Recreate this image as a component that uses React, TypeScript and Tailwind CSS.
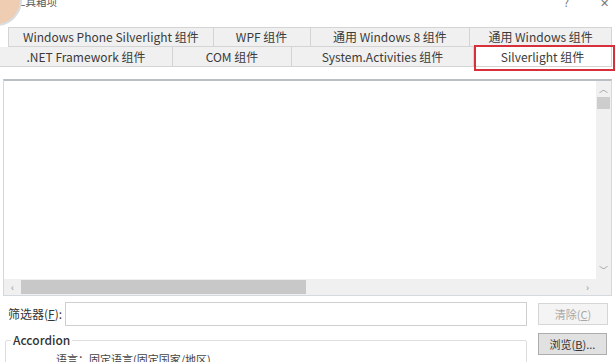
const font = { fontFamily: '"Noto Sans CJK SC", "Noto Sans", sans-serif' };

function Tab({ label, w, active }: { label: string; w: string; active?: boolean }) {
  return (
    <div
      className={`relative flex h-full items-center justify-center border-r border-[#d4d4d4] text-[12px] ${w} ${
        active ? "bg-white" : "bg-[#f0f0f0]"
      }`}
    >
      <span className="text-[#3b3b3b]">{label}</span>
      {active && <div className="absolute -top-[2px] -bottom-[5px] left-0 -right-[4px] border-2 border-[#d8303a]" />}
    </div>
  );
}

export default function App() {
  return (
    <div className="relative h-[362px] w-[615px] overflow-hidden bg-white text-[#333]" style={font}>
      {/* title bar */}
      <div className="relative h-[27px] bg-white">
        <span className="absolute -top-[6px] left-[-6px] text-[10.5px] text-[#555]">选择工具箱项</span>
        <div className="absolute -left-[30px] -top-[26px] h-[52px] w-[52px] rounded-full border-2 border-[#d9dde0] bg-[#efcdb2]" />
        <span className="absolute -top-[6px] right-[46px] text-[11px] text-[#777]">?</span>
        <span className="absolute -top-[6px] right-[6px] text-[11px] text-[#777]">✕</span>
      </div>

      {/* tabs */}
      <div className="ml-[8px] flex h-[20px] w-[604px] border-t border-b border-l border-[#d4d4d4]">
        <Tab label="Windows Phone Silverlight 组件" w="w-[205px]" />
        <Tab label="WPF 组件" w="w-[97px]" />
        <Tab label="通用 Windows 8 组件" w="w-[160px]" />
        <Tab label="通用 Windows 组件" w="w-[142px]" />
      </div>
      <div className="flex h-[20px] w-[612px] border-b border-[#d4d4d4]">
        <Tab label=".NET Framework 组件" w="w-[173px]" />
        <Tab label="COM 组件" w="w-[119px]" />
        <Tab label="System.Activities 组件" w="w-[182px]" />
        <Tab label="Silverlight 组件" w="w-[138px]" active />
      </div>

      {/* list */}
      <div className="mx-[3px] mt-[12px] flex h-[217px] flex-col border border-[#d3dadd] border-t-2 border-t-[#b9c0c3]">
        <div className="flex flex-1">
          <div className="flex-1 bg-white" />
          <div className="flex w-[15px] flex-col items-center bg-[#f0f0f0]">
            <span className="mt-[3px] text-[9px] leading-[10px] text-[#9a9a9a]">︿</span>
            <div className="mt-[3px] h-[12px] w-[13px] bg-[#cdcdcd]" />
            <div className="flex-1" />
            <span className="mb-[3px] text-[9px] leading-[10px] text-[#9a9a9a]">﹀</span>
          </div>
        </div>
        <div className="flex h-[16px] bg-[#f0f0f0]">
          <span className="w-[17px] text-center text-[10px] leading-[16px] text-[#9a9a9a]">‹</span>
          <div className="my-[1px] w-[285px] bg-[#c8c8c8]" />
          <div className="flex-1" />
          <span className="w-[17px] text-center text-[10px] leading-[16px] text-[#9a9a9a]">›</span>
          <div className="w-[15px]" />
        </div>
      </div>

      {/* filter row */}
      <div className="mt-[6px] flex h-[24px] items-center">
        <span className="ml-[8px] w-[57px] text-[12px] text-[#333]">
          筛选器(<span className="underline">F</span>):
        </span>
        <div className="h-[24px] w-[462px] border border-[#cfcfcf] bg-white" />
        <div className="ml-[11px] flex h-[22px] w-[70px] items-center justify-center border border-[#d6d6d6] bg-[#f4f4f4] text-[11px] text-[#a9a9a9]">
          清除(<span className="underline">C</span>)
        </div>
      </div>

      {/* bottom */}
      <div className="mt-[7px] flex">
        <div className="relative ml-[5px] mt-[7px] h-[40px] w-[522px] rounded-[2px] border border-[#dedede]">
          <span className="absolute -top-[10px] left-[5px] bg-white px-[2px] text-[12px] font-medium text-[#333]">
            Accordion
          </span>
          <div className="ml-[50px] mt-[10px] text-[11px] text-[#444]">语言：固定语言(固定国家/地区)</div>
        </div>
        <div className="ml-[11px] flex h-[22px] w-[69px] items-center justify-center border border-[#adadad] bg-[#e1e1e1] text-[11px] text-[#333]">
          浏览(<span className="underline">B</span>)...
        </div>
      </div>
    </div>
  );
}
